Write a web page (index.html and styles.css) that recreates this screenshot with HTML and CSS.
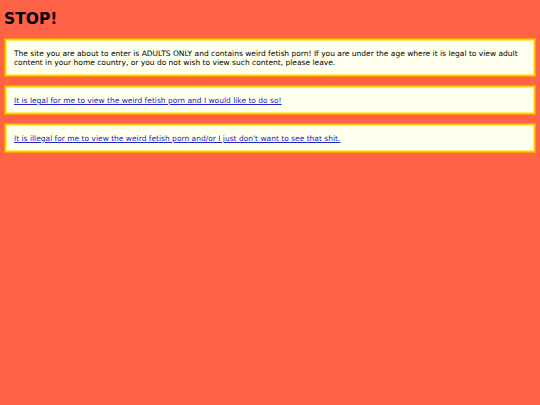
FILE: index.html
```html
<!DOCTYPE html>
<html>
<head>
<meta charset="utf-8">
<link rel="stylesheet" href="styles.css">
</head>
<body>
<h1 class="title">STOP!</h1>
<div class="box">
<p class="msg">The site you are about to enter is ADULTS ONLY and contains weird fetish porn! If you are under the age where it is legal to view adult content in your home country, or you do not wish to view such content, please leave.</p>
</div>
<div class="box link-box">
<a class="link" href="#">It is legal for me to view the weird fetish porn and I would like to do so!</a>
</div>
<div class="box link-box">
<a class="link" href="#">It is illegal for me to view the weird fetish porn and/or I just don't want to see that shit.</a>
</div>
</body>
</html>
```

FILE: styles.css
```css
html, body {
  margin: 0;
  padding: 0;
}
body {
  background: #ff6347;
  padding: 4px;
  font-family: "DejaVu Sans", Verdana, sans-serif;
  font-size: 7.5px;
  color: #000;
}
.title {
  margin: 6px 0 10px 0;
  font-size: 15.5px;
  line-height: 18px;
  font-weight: bold;
}
.box {
  background: #ffffee;
  border: 1px solid #ff9900;
  box-shadow: inset 0 0 0 1px #ffcc00, inset 0 0 0 2px #ffee66;
  padding: 10px 9px 9px;
  margin-bottom: 8px;
}
.msg {
  margin: 0;
  line-height: 9px;
}
.link-box {
  padding: 10px 9px 9px;
}
.link {
  color: #2222cc;
  text-decoration: underline;
  line-height: 9px;
}
```
